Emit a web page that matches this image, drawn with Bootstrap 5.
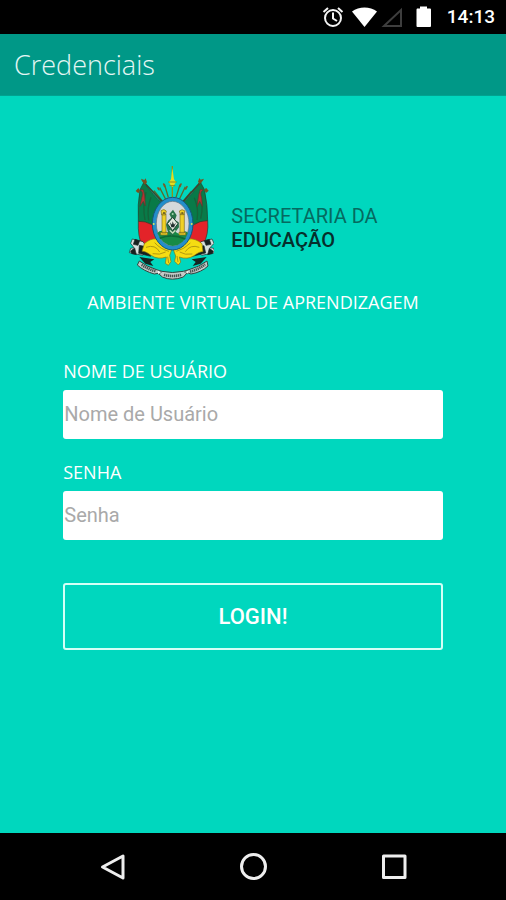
<!DOCTYPE html>
<html lang="pt-BR">
<head>
<meta charset="utf-8">
<meta name="viewport" content="width=device-width, initial-scale=1">
<title>Credenciais</title>
<link href="https://cdn.jsdelivr.net/npm/bootstrap@5.3.0/dist/css/bootstrap.min.css" rel="stylesheet">
<style>
  body { background: #00d7be; font-family: "Open Sans", "Noto Sans", sans-serif; }
  .status-bar { height: 34px; padding-right: 11px; gap: 2px; font: 500 19px/34px Roboto, sans-serif; }
  .status-bar svg, .system-nav svg, .crest { display: block; }
  .app-bar { background: #009887; padding: 10px 14px 10px; border-bottom: 1px solid #00a391; }
  .app-title { font-size: 27px; line-height: 41px; font-weight: 300; color: #e4f6f4; }
  .login-area { padding: 68px 12.5% 32px; }
  .brand { gap: 17px; }
  .brand-name { font: 400 20px/24px Roboto, sans-serif; color: #056a60; padding-top: 10px; }
  .brand-name strong { font-weight: 500; color: #062f2c; }
  .tagline { font-size: 18px; line-height: 24px; font-weight: 400; margin: 9px -16px 0; }
  .login-form { margin-top: 45px; }
  .field-label { display: block; font-size: 18px; line-height: 24px; margin-bottom: 7px; }
  .field-input.form-control { height: 49px; border: 0; border-radius: 3px; padding: 0 0 2px 1px; font: 400 20px/24px Roboto, sans-serif; }
  .field-input::placeholder { color: #a9a9a9; opacity: 1; }
  .field-group { margin-bottom: 21px; }
  .login-btn { margin-top: 22px; height: 67px; border: 2px solid #d4fff6; border-radius: 3px; font: 500 22px/26px Roboto, sans-serif; }
  .system-nav { padding: 0 8.333%; height: 67px; }
  .system-nav .btn { border-radius: 0; }
</style>
<script src="https://cdn.jsdelivr.net/npm/bootstrap@5.3.0/dist/js/bootstrap.bundle.min.js"></script>
</head>
<body class="d-flex flex-column min-vh-100">
<div class="status-bar bg-black text-white d-flex justify-content-end align-items-center">
  <svg width="126" height="34" viewBox="0 0 126 34" aria-hidden="true">
    <g fill="none" stroke="#f4f4f4" stroke-width="2">
      <circle cx="14" cy="18" r="8"/>
      <path d="M14 12.500v6l4 2.500"/>
      <path d="M4.500 12l4.500-4M23.500 12l-4.500-4"/>
    </g>
    <path d="M33 11.500C40 6 51 6 58 11.500L45.500 27z" fill="#fff"/>
    <path d="M65 26L82 10V26z" fill="none" stroke="#3e3e3e" stroke-width="2"/>
    <path d="M98 8.500h3V6.500h7v2h3q1 0 1 1V26q0 1-1 1H98.500q-1 0-1-1V9.500z" fill="#fff"/>
  </svg>
  <span>14:13</span>
</div>

<header class="app-bar">
  <h1 class="app-title m-0">Credenciais</h1>
</header>

<main class="login-area flex-grow-1 text-white">
  <div class="brand d-flex justify-content-center align-items-center">
    <svg class="crest" width="86" height="117" viewBox="24 24 258 351" role="img" aria-label="Brasão do Rio Grande do Sul">
      <!-- lances -->
      <g fill="none" stroke="#5b6b2c" stroke-width="4">
        <path d="M138 132L119 95M145 124L133 84M168 124L180 86M178 130L196 92M128 136L102 104M188 138L214 106"/>
      </g>
      <g stroke="#7b5a28" stroke-width="5" stroke-linecap="round">
        <path d="M117 101l-3-5M134 91l-3-7M180 91l3-7M197 99l4-7"/>
      </g>
      <path d="M157 30v94" stroke="#8a9418" stroke-width="4"/>
      <path d="M157 36l5 34 6 8-6 10-5 6-5-6-5-10 6-8z" fill="#e5dc20"/>
      <path d="M144 78h26M148 89h18" stroke="#8f8d18" stroke-width="3"/>
      <!-- flags -->
      <g stroke="#263c2c" stroke-width="2">
        <path d="M72 78Q100 120 127 142Q100 171 99 205L55 196Q52 145 60 101z" fill="#087a48"/>
        <path d="M241 78Q217 118 188 141Q215 171 217 205L263 194Q263 145 253 100z" fill="#087a48"/>
        <path d="M55 196Q75 194 98 207Q100 233 116 250Q90 251 66 270Q53 240 55 196z" fill="#e32329"/>
        <path d="M263 194Q240 193 218 208Q217 232 199 250Q229 250 249 269Q267 233 263 194z" fill="#e32329"/>
      </g>
      <g fill="none" stroke="#15633a" stroke-width="4">
        <path d="M78 108Q67 150 75 192M93 124Q80 158 86 193M239 108Q252 150 242 188M223 125Q237 158 231 192"/>
      </g>
      <path d="M71 78L137 148M243 77L182 145" stroke="#3a482e" stroke-width="5"/>
      <path d="M66 76l-3-8 10 4 4-5 4 12-6 7zM248 75l4-7-10 3-4-5-4 11 5 7z" fill="#79501f"/>
      <path d="M47 105l8-9 5 8-5 8zM266 104l-8-9-5 8 5 8z" fill="#79501f"/>
      <path d="M60 102q12 5 5 24l-5 25 10-15 6 14-2-31-4-18zM250 102q-12 5-5 24l2 25-8-15-8 16 5-35 5-17z" fill="#b43233" stroke="#5e3a2d" stroke-width="2"/>
      <!-- cannons -->
      <g stroke="#192726" stroke-width="2">
        <path d="M37 249l32 8 17 25-18 16-40-8 4-13 10-2-10-13z" fill="#d7dfdd"/>
        <path d="M276 249l-33 8-15 24 17 17 39-8-3-13-11-2 12-13z" fill="#d7dfdd"/>
        <path d="M45 250l14 4-5 14-14-3zM58 268l29 6 5 27-36-9zM32 285l12-9 5 20-14-3zM268 250l-15 4 5 14 15-3zM252 269l-28 6-7 26 40-10zM280 286l-12-9-5 19 14-3z" fill="#17201f"/>
      </g>
      <!-- yellow drapery -->
      <g stroke="#857413" stroke-width="2">
        <path d="M73 263Q92 246 111 249Q130 267 157 276L149 298 153 317 145 328 136 322 139 303Q113 312 93 298Q76 285 66 286z" fill="#f6dc12"/>
        <path d="M246 263Q226 246 204 249Q185 267 158 276L167 300 164 316 175 327 182 318 178 303Q202 312 222 299Q239 286 249 287z" fill="#f6dc12"/>
        <path d="M78 274q28-10 41 14M104 260q18 20 43 26M98 293q21 5 39-5M238 274q-27-10-42 13M211 261q-19 19-42 25M217 294q-22 4-38-6M143 302l3 19M171 300l3 18" fill="none" stroke="#b29a10" stroke-width="3"/>
      </g>
      <!-- central oval -->
      <ellipse cx="158" cy="203" rx="61" ry="79" fill="#238ecb" stroke="#15567a" stroke-width="3"/>
      <ellipse cx="158" cy="203" rx="49" ry="67" fill="#d5d9db" stroke="#60717c" stroke-width="2"/>
      <path d="M112 231q12-14 25 0 20-13 39 2 15-13 28-3Q192 267 158 270Q126 266 112 231z" fill="#178b47"/>
      <path d="M119 247q36-16 77 2" fill="none" stroke="#0d6936" stroke-width="5"/>
      <g fill="#f0d126" stroke="#806d20" stroke-width="2">
        <path d="M126 174h12v57h-12zM180 174h13v57h-13zM122 229h20v8h-20zM177 229h20v8h-20zM123 164q9-7 16 1l-3 12h-11zM178 165q8-8 17 0l-3 11h-11z"/>
      </g>
      <path d="M129 171h6M184 171h6" stroke="#5b5125" stroke-width="5"/>
      <path d="M159 161l11 17-5 14 11 7 1 15-15 19-7 7-12-14-5-20 7-13 9-7-6-12z" fill="#27744a"/>
      <path d="M158 184l16 19-16 21-16-21z" fill="#e2e8df" stroke="#1c3f32" stroke-width="3"/>
      <path d="M150 199l6 7 2-10 4 10 6-6-6 14h-8z" fill="#202e2d"/>
      <circle cx="158" cy="174" r="3" fill="#a6d6af"/><path d="M149 223l9 8 8-8" fill="none" stroke="#c8dfbe" stroke-width="4"/>
      <g fill="#d7e85e"><circle cx="101" cy="204" r="3"/><circle cx="215" cy="204" r="3"/></g>
      <!-- motto ribbon -->
      <path d="M58 303L103 310 91 318 100 330 76 323zM260 303L215 310 227 318 218 330 242 323z" fill="#132521"/>
      <path d="M58 315Q80 332 112 342L126 346Q156 353 190 346L207 341Q237 333 261 315L264 330Q244 349 213 354L202 350 190 363Q156 376 127 363L115 352 103 354Q71 345 52 327z" fill="#c3cac8" stroke="#35433f" stroke-width="3"/>
      <path d="M65 326Q83 340 108 346M132 356Q158 364 184 356M210 347Q235 341 255 325" fill="none" stroke="#46524f" stroke-width="8" stroke-dasharray="4 2"/>
      <path d="M113 342l12 6-10 8M206 342l-13 6 11 6" fill="#eff3f1" stroke="#35433f" stroke-width="2"/>
    </svg>
    <div class="brand-name">SECRETARIA DA<br><strong>EDUCAÇÃO</strong></div>
  </div>
  <p class="tagline text-center">AMBIENTE VIRTUAL DE APRENDIZAGEM</p>

  <form class="login-form">
    <div class="field-group">
      <label class="field-label" for="username">NOME DE USUÁRIO</label>
      <input class="form-control field-input" id="username" type="text" placeholder="Nome de Usuário" autocomplete="username">
    </div>
    <div class="field-group">
      <label class="field-label" for="password">SENHA</label>
      <input class="form-control field-input" id="password" type="password" placeholder="Senha" autocomplete="current-password">
    </div>
    <button class="btn login-btn w-100 text-white" type="button">LOGIN!</button>
  </form>
</main>

<nav class="system-nav bg-black d-flex" aria-label="Sistema">
  <button class="btn flex-fill d-flex justify-content-center align-items-center" type="button" aria-label="Voltar">
    <svg width="28" height="28" viewBox="0 0 28 28" fill="none" stroke="#eee" stroke-width="3" stroke-linejoin="round"><path d="M25 3v22L4.500 14z"/></svg>
  </button>
  <button class="btn flex-fill d-flex justify-content-center align-items-center" type="button" aria-label="Início">
    <svg width="28" height="28" viewBox="0 0 28 28" fill="none" stroke="#eee" stroke-width="3"><circle cx="14.500" cy="13.500" r="12"/></svg>
  </button>
  <button class="btn flex-fill d-flex justify-content-center align-items-center" type="button" aria-label="Recentes">
    <svg width="28" height="28" viewBox="0 0 28 28" fill="none" stroke="#eee" stroke-width="3" stroke-linejoin="round"><path d="M3.500 3h21.500v21.500H3.500z"/></svg>
  </button>
</nav>
</body>
</html>
